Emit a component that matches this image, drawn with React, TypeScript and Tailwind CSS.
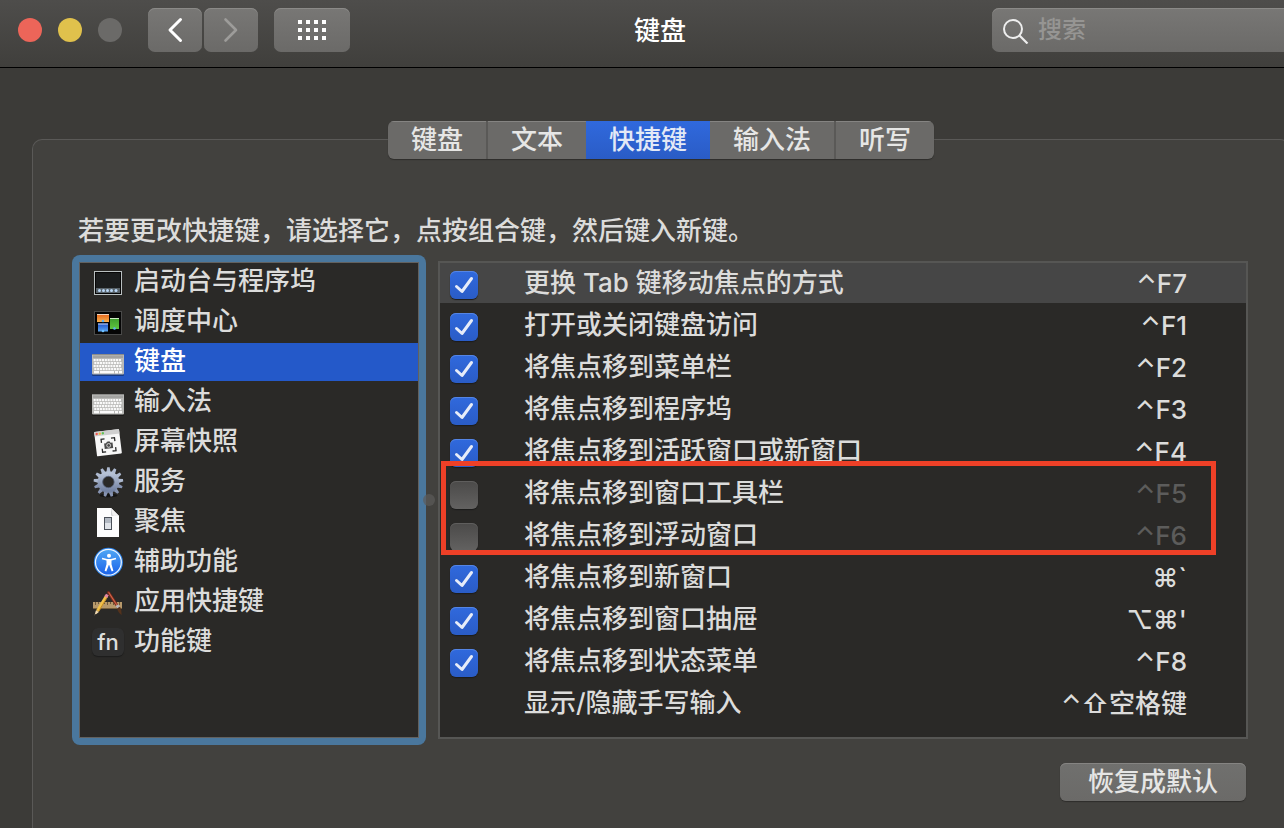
import { useState } from "react";
import type { ReactNode } from "react";

function LaunchpadIcon() {
  return (
    <svg viewBox="0 0 32 32" className="size-8" aria-hidden="true">
      <rect x="2.5" y="5.5" width="27" height="23" fill="#1b1d1e" stroke="#b9bfc0" />
      <rect x="3.5" y="6.5" width="25" height="21" fill="none" stroke="#050505" />
      <rect x="4" y="22" width="24" height="5" fill="#59636a" />
      {[7, 11, 15, 19, 23.5].map((x) => (
        <circle key={x} cx={x + 0.5} cy="24.5" r="1.5" fill="#b9d6f5" />
      ))}
    </svg>
  );
}

function MissionControlIcon() {
  return (
    <svg viewBox="0 0 32 32" className="size-8" aria-hidden="true">
      <defs>
        <linearGradient id="mcOrange" x1="0" y1="0" x2="0" y2="1">
          <stop offset="0" stopColor="#e8641b" />
          <stop offset="1" stopColor="#f9b04a" />
        </linearGradient>
        <linearGradient id="mcBlue" x1="0" y1="0" x2="0" y2="1">
          <stop offset="0" stopColor="#1c50c8" />
          <stop offset="1" stopColor="#5aa6f2" />
        </linearGradient>
        <linearGradient id="mcGreen" x1="0" y1="0" x2="0" y2="1">
          <stop offset="0" stopColor="#3d9a2c" />
          <stop offset="1" stopColor="#5fc440" />
        </linearGradient>
      </defs>
      <rect x="2.5" y="5.5" width="27" height="23" fill="#050505" stroke="#4a4a49" />
      <rect x="5" y="8" width="12" height="8" fill="url(#mcOrange)" />
      <rect x="5" y="8" width="12" height="1" fill="#f4d5bb" />
      <rect x="6" y="17.500" width="10" height="8" fill="url(#mcBlue)" />
      <rect x="6" y="17.500" width="10" height="1" fill="#c9dcf7" />
      <rect x="18" y="12" width="9" height="11" fill="url(#mcGreen)" />
      <rect x="18" y="12" width="9" height="1" fill="#cdecc2" />
      <circle cx="11" cy="15" r="1.300" fill="#5ab0f5" />
      <circle cx="11" cy="25" r="1.300" fill="#6cc0ff" />
      <circle cx="22.500" cy="22.500" r="1.300" fill="#5ab0f5" />
    </svg>
  );
}

function KeyboardIcon() {
  const rows = [13, 16, 19, 22];
  return (
    <svg viewBox="0 0 32 32" className="size-8" aria-hidden="true">
      <rect x="0" y="9" width="32" height="21" rx="1" fill="#000" opacity="0.35" />
      <rect x="0" y="8" width="32" height="20.500" rx="1" fill="#b9b9b7" />
      <rect x="0" y="8" width="32" height="1" fill="#8c8c8a" />
      <rect x="1" y="9.500" width="30" height="2.500" fill="#a3a3a1" />
      {rows.map((y, r) =>
        Array.from({ length: 10 }, (_, i) => (
          <rect key={`${y}-${i}`} x={1.600 + i * 2.800 + (r % 2) * 0.7} y={y} width="2.100" height="2.200" fill="#fafafa" />
        )),
      )}
      <rect x="2" y="25" width="5" height="2.300" fill="#fafafa" />
      <rect x="8" y="25" width="14" height="2.300" fill="#fafafa" />
      <rect x="23" y="25" width="3" height="2.300" fill="#fafafa" />
      <rect x="27" y="25" width="3" height="2.300" fill="#fafafa" />
    </svg>
  );
}

function ScreenshotIcon() {
  return (
    <svg viewBox="0 0 32 32" className="size-8" aria-hidden="true">
      <g transform="rotate(-7 16 16.500)">
        <rect x="3.500" y="4.500" width="25" height="24.500" rx="0.8" fill="#f7f7f7" />
        <rect x="3.500" y="4.500" width="25" height="4.500" fill="#cfcfcf" />
        <circle cx="5.800" cy="6.700" r="1.200" fill="#f0574f" />
        <circle cx="8.900" cy="6.700" r="1.200" fill="#f3b43a" />
        <circle cx="12" cy="6.700" r="1.200" fill="#5fc454" />
        <path
          d="M9.500 16v-3.500h3.500M19.500 12.500h3.500V16M23 22v3.500h-3.500M13 25.500H9.500V22"
          fill="none"
          stroke="#2b2b2b"
          strokeWidth="1.300"
        />
        <path d="M12 17h2l1-1.500h2.500l1 1.500h2v5.500H12z" fill="#4a4a4a" />
        <circle cx="16.300" cy="19.500" r="1.900" fill="#4a4a4a" stroke="#e6e6e6" strokeWidth="0.8" />
      </g>
    </svg>
  );
}

function GearIcon() {
  return (
    <svg viewBox="0 0 32 32" className="size-8" aria-hidden="true">
      <defs>
        <linearGradient id="gearFill" x1="0" y1="0" x2="0" y2="1">
          <stop offset="0" stopColor="#b6c2d6" />
          <stop offset="1" stopColor="#7483a3" />
        </linearGradient>
      </defs>
      <ellipse cx="16.500" cy="29.500" rx="9" ry="1.800" fill="#141414" />
      {Array.from({ length: 13 }, (_, i) => (
        <path
          key={i}
          d="M14.300 6.500L15.200 1.200h2.400l1 5.300z"
          fill={i > 3 && i < 10 ? "#8794b2" : "#adb9cf"}
          transform={`rotate(${(i * 360) / 13} 16.400 16)`}
        />
      ))}
      <circle cx="16.400" cy="16" r="8.300" fill="none" stroke="url(#gearFill)" strokeWidth="5" />
      <circle cx="16.400" cy="16" r="5.700" fill="none" stroke="#56617a" strokeWidth="0.8" />
    </svg>
  );
}

function DocumentIcon() {
  return (
    <svg viewBox="0 0 32 32" className="size-8" aria-hidden="true">
      <path d="M5 2h14l8 8v21H5z" fill="#fdfdfd" />
      <path d="M19 2l8 8h-6.500q-1.500 0-1.500-1.500z" fill="#cfd0d2" />
      <path d="M19 2l8 8h-5q-2.200-.3-1.800-2.600z" fill="#f1f1f1" />
      <rect x="12.500" y="11.500" width="7" height="12" fill="#dfe3e8" stroke="#4b5159" />
      <rect x="13" y="12" width="6" height="5" fill="#b2b9c2" />
    </svg>
  );
}

function AccessibilityIcon() {
  return (
    <svg viewBox="0 0 32 32" className="size-8" aria-hidden="true">
      <defs>
        <linearGradient id="accessFill" x1="0" y1="0" x2="0" y2="1">
          <stop offset="0" stopColor="#4fa6f4" />
          <stop offset="1" stopColor="#1a62ea" />
        </linearGradient>
      </defs>
      <circle cx="16.400" cy="16.300" r="14.500" fill="#2f86ee" />
      <circle cx="16.400" cy="16.300" r="12.900" fill="url(#accessFill)" stroke="#eef6ff" strokeWidth="1.200" />
      <circle cx="17" cy="9.700" r="2" fill="#fff" />
      <path
        d="M10.200 11.800l5 1.100h3.600l5-1.100.4 1.500-4.700 1.300v3.600l1.900 6.600-1.700.6-2.500-6.300h-.4l-2.500 6.300-1.700-.6 1.900-6.600v-3.600l-4.700-1.300z"
        fill="#fff"
      />
    </svg>
  );
}

function AppShortcutsIcon() {
  return (
    <svg viewBox="0 0 32 32" className="size-8" aria-hidden="true">
      <rect x="1" y="16" width="29" height="6.500" fill="#b7996b" />
      <path d="M1 22.500h29" stroke="#77603c" />
      <path d="M3.500 16v3M6.500 16v2M9.500 16v3M12.500 16v2M15.500 16v3M18.500 16v2M21.500 16v3M24.500 16v2M27.500 16v3" stroke="#5d4a2d" strokeWidth="0.8" />
      <path d="M16.500 6.500l9.500 14.500" stroke="#7a2a1c" strokeWidth="3" strokeLinecap="round" />
      <path d="M16.600 6.200l9 14" stroke="#d0664a" strokeWidth="1.200" />
      <path d="M23.500 20l2.800-1.800 1.700 2.600-2.800 1.800z" fill="#b9b9b9" />
      <path d="M25.200 22.600l2.800-1.800q2 3.300 1.700 8.200-3.800-2.200-4.500-6.400z" fill="#54321c" />
      <path d="M14.500 10l-9 15" stroke="#f2c14a" strokeWidth="3.200" />
      <path d="M15.600 10.500l-9 15" stroke="#b8801f" strokeWidth="0.9" />
      <path d="M13.700 11.200l1.700-2.700" stroke="#e386a2" strokeWidth="3.200" />
      <path d="M4 24.200l2.900 1.800-4.500 3.500z" fill="#f3dcb2" />
      <path d="M2.900 27.700l1.200.7-1.800 1.200z" fill="#222" />
    </svg>
  );
}

function FnIcon() {
  return (
    <span
      aria-hidden="true"
      className="flex h-7 w-8 items-center justify-center rounded-md bg-[#2f2f2f] text-[22px] leading-none font-medium text-[#dededd] shadow-[0_1px_1px_#1c1c1c]"
    >
      fn
    </span>
  );
}

const categories: { name: string; icon: ReactNode }[] = [
  { name: "启动台与程序坞", icon: <LaunchpadIcon /> },
  { name: "调度中心", icon: <MissionControlIcon /> },
  { name: "键盘", icon: <KeyboardIcon /> },
  { name: "输入法", icon: <KeyboardIcon /> },
  { name: "屏幕快照", icon: <ScreenshotIcon /> },
  { name: "服务", icon: <GearIcon /> },
  { name: "聚焦", icon: <DocumentIcon /> },
  { name: "辅助功能", icon: <AccessibilityIcon /> },
  { name: "应用快捷键", icon: <AppShortcutsIcon /> },
  { name: "功能键", icon: <FnIcon /> },
];

type Shortcut = { name: string; keys: string; enabled?: boolean };

const initialShortcuts: Shortcut[] = [
  { name: "更换 Tab 键移动焦点的方式", keys: "⌃F7", enabled: true },
  { name: "打开或关闭键盘访问", keys: "⌃F1", enabled: true },
  { name: "将焦点移到菜单栏", keys: "⌃F2", enabled: true },
  { name: "将焦点移到程序坞", keys: "⌃F3", enabled: true },
  { name: "将焦点移到活跃窗口或新窗口", keys: "⌃F4", enabled: true },
  { name: "将焦点移到窗口工具栏", keys: "⌃F5", enabled: false },
  { name: "将焦点移到浮动窗口", keys: "⌃F6", enabled: false },
  { name: "将焦点移到新窗口", keys: "⌘`", enabled: true },
  { name: "将焦点移到窗口抽屉", keys: "⌥⌘'", enabled: true },
  { name: "将焦点移到状态菜单", keys: "⌃F8", enabled: true },
  { name: "显示/隐藏手写输入", keys: "⌃⇧空格键" },
];

const tabs = ["键盘", "文本", "快捷键", "输入法", "听写"];

const toolbarButton =
  "flex h-11 items-center justify-center rounded-[7px] bg-linear-to-b from-[#787775] to-[#6b6a68] shadow-[inset_0_1px_0_#8b8a88]";

function Header() {
  return (
    <header className="grid h-[68px] grid-cols-[1fr_auto_1fr] items-start border-b border-black bg-linear-to-b from-[#4e4d4b] to-[#403f3c] pt-2 pr-5 pl-[18px]">
      <div className="flex h-11 items-center">
        <div className="flex gap-4">
          <button type="button" aria-label="关闭" className="size-6 rounded-full bg-[#ec6559]" />
          <button type="button" aria-label="最小化" className="size-6 rounded-full bg-[#e0c14c]" />
          <button type="button" aria-label="缩放" disabled className="size-6 rounded-full bg-[#6b6a68]" />
        </div>
        <div className="ml-[26px] flex gap-0.5">
          <button type="button" aria-label="后退" className={`${toolbarButton} w-[54px]`}>
            <svg viewBox="0 0 16 26" className="h-[26px] w-4" aria-hidden="true">
              <path d="M13.500 2.500L3 13l10.500 10.500" fill="none" stroke="#fff" strokeWidth="3" strokeLinecap="round" strokeLinejoin="round" />
            </svg>
          </button>
          <button type="button" aria-label="前进" disabled className={`${toolbarButton} w-[54px]`}>
            <svg viewBox="0 0 16 26" className="h-[26px] w-4" aria-hidden="true">
              <path d="M2.500 2.500L13 13 2.500 23.500" fill="none" stroke="#9d9c9a" strokeWidth="2.600" strokeLinecap="round" strokeLinejoin="round" />
            </svg>
          </button>
        </div>
        <button type="button" aria-label="显示全部" className={`${toolbarButton} ml-4 w-[76px]`}>
          <svg viewBox="0 0 28 20" className="h-5 w-7" fill="#fff" shapeRendering="crispEdges" aria-hidden="true">
            {[0, 8, 16].map((y) => [0, 8, 16, 24].map((x) => <rect key={`${x}-${y}`} x={x} y={y} width="4" height="4" />))}
          </svg>
        </button>
      </div>
      <h1 className="text-[26px] leading-[46px] font-medium text-white">键盘</h1>
      <label className={`${toolbarButton} w-[310px] gap-2 justify-self-end pl-[10px]`}>
        <svg viewBox="0 0 28 28" className="size-7 shrink-0" aria-hidden="true">
          <circle cx="11" cy="13" r="9" fill="none" stroke="#eee" strokeWidth="2" />
          <path d="M17.500 19.500l8 8" stroke="#eee" strokeWidth="2.200" />
        </svg>
        <input
          type="text"
          aria-label="搜索"
          placeholder="搜索"
          className="min-w-0 flex-1 bg-transparent text-2xl leading-8 font-medium text-white outline-none placeholder:text-[#969593]"
        />
      </label>
    </header>
  );
}

function CheckBox({ label, checked, onChange }: { label: string; checked: boolean; onChange: () => void }) {
  return (
    <span className="grid size-7">
      <input
        type="checkbox"
        aria-label={label}
        checked={checked}
        onChange={onChange}
        className="peer col-start-1 row-start-1 size-7 appearance-none rounded-md bg-linear-to-b from-[#4b4a49] to-[#636261] shadow-[inset_0_1px_0_#5f5e5d,0_1px_1px_#1b1b1b] checked:from-[#3069dd] checked:to-[#2a5cc6] checked:shadow-[inset_0_1px_0_#5585e4,0_1px_1px_#1b1b1b]"
      />
      <svg viewBox="0 0 28 28" className="pointer-events-none invisible col-start-1 row-start-1 size-7 peer-checked:visible" aria-hidden="true">
        <path d="M6.500 15.500L12 20.500 21.500 7.500" fill="none" stroke="#e6ecf9" strokeWidth="3" strokeLinecap="round" strokeLinejoin="round" />
      </svg>
    </span>
  );
}

export default function App() {
  const [tab, setTab] = useState("快捷键");
  const [category, setCategory] = useState("键盘");
  const [shortcuts, setShortcuts] = useState(initialShortcuts);

  const toggle = (name: string) =>
    setShortcuts((list) => list.map((s) => (s.name === name ? { ...s, enabled: !s.enabled } : s)));

  return (
    <div className="overflow-hidden bg-[#3c3b38] font-[Inter,'Noto_Sans_CJK_SC',sans-serif] text-[26px] font-medium text-[#dcdcdb]">
      <div className="flex min-h-screen w-[calc(100%+38px)] flex-col">
        <Header />
        <main className="flex flex-1 flex-col px-8 pt-[53px]">
          <div
            role="tablist"
            className="z-10 flex h-[38px] self-center overflow-hidden rounded-md bg-[#6b6a68] shadow-[0_1px_1px_#2e2d2b]"
          >
            {tabs.map((name) => (
              <button
                key={name}
                type="button"
                role="tab"
                aria-selected={name === tab}
                onClick={() => setTab(name)}
                className={
                  name === tab
                    ? "bg-linear-to-b from-[#3069dd] to-[#2a5cc6] px-[23px] leading-[38px] text-[#e3e9f6]"
                    : "border-[#5a5957] px-[23px] leading-[38px] text-[#e6e6e5] shadow-[inset_0_1px_0_#858482] first:border-r-2 last:border-l-2"
                }
              >
                {name}
              </button>
            ))}
          </div>
          <section className="-mt-5 flex flex-1 flex-col rounded-t-[10px] border border-b-0 border-[#5a5957] bg-[#42413e] pt-[71px] pr-[41px] pb-[27px] pl-[39px]">
            <p className="pl-1.5 leading-10">若要更改快捷键，请选择它，点按组合键，然后键入新键。</p>
            <div className="mt-1 flex items-center">
              <nav aria-label="类别" className="h-[490px] w-[354px] shrink-0 rounded-lg bg-[#4a779d] p-[7px]">
                <ul className="flex h-full flex-col gap-0.5 border border-[#62615f] bg-[#2a2927]">
                  {categories.map(({ name, icon }) => (
                    <li key={name}>
                      <button
                        type="button"
                        aria-current={name === category}
                        onClick={() => setCategory(name)}
                        className={
                          name === category
                            ? "flex h-[38px] w-full items-center gap-2.5 bg-[#2459c9] pl-3 text-white"
                            : "flex h-[38px] w-full items-center gap-2.5 pl-3"
                        }
                      >
                        {icon}
                        <span className="pb-0.5 leading-9">{name}</span>
                      </button>
                    </li>
                  ))}
                </ul>
              </nav>
              <div className="relative h-3 w-3 shrink-0">
                <span className="absolute top-0 -left-[3px] size-3 rounded-full bg-[#5c5b5a]/70" />
              </div>
              <div className="relative h-[478px] flex-1 border-2 border-[#565654] bg-[#2a2927]">
                <table className="w-full border-separate border-spacing-0">
                  <tbody>
                    {shortcuts.map(({ name, keys, enabled }) => (
                      <tr key={name} className="h-[42px] leading-9 first:bg-[#464646]">
                        <td className="w-[84px] border-b-2 border-[#2a2927] p-0 pt-1 pl-2.5">
                          {enabled !== undefined && <CheckBox label={name} checked={enabled} onChange={() => toggle(name)} />}
                        </td>
                        <td className="border-b-2 border-[#2a2927] p-0">{name}</td>
                        <td
                          className={
                            enabled === false
                              ? "border-b-2 border-[#2a2927] p-0 pt-0.5 pr-[59px] text-right text-[#5c5c5b]"
                              : "border-b-2 border-[#2a2927] p-0 pt-0.5 pr-[59px] text-right"
                          }
                        >
                          {keys}
                        </td>
                      </tr>
                    ))}
                  </tbody>
                </table>
                <div className="pointer-events-none absolute top-[198px] right-[30px] left-px h-[94px] border-5 border-[#ee4027]" />
              </div>
            </div>
            <button
              type="button"
              className="mt-[18px] mr-0.5 h-[38px] self-end rounded-md bg-linear-to-b from-[#70706e] to-[#6b6a68] px-7 leading-[38px] text-[#e6e6e5] shadow-[inset_0_1px_0_#858482,0_1px_1px_#2e2d2b]"
            >
              恢复成默认
            </button>
          </section>
        </main>
      </div>
    </div>
  );
}
